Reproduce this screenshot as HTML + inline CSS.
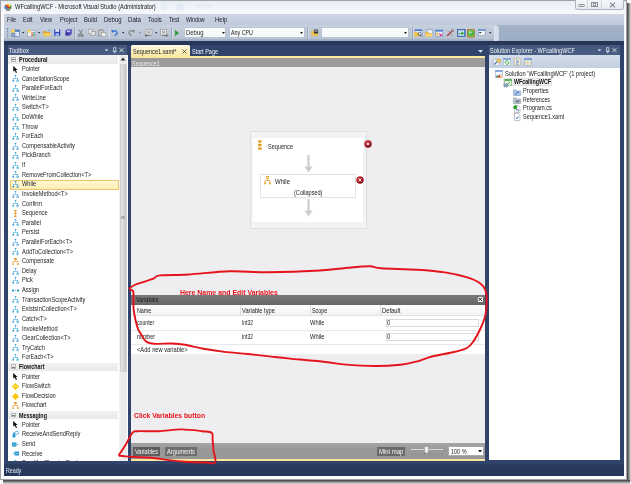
<!DOCTYPE html>
<html><head><meta charset="utf-8">
<style>
*{margin:0;padding:0;box-sizing:border-box}
html,body{width:631px;height:484px;overflow:hidden;background:#fff}
body{position:relative;font-family:"Liberation Sans",sans-serif;color:#1e1e1e}
.a{position:absolute}
.t{position:absolute;white-space:nowrap;line-height:1;transform-origin:0 0}
svg.a{overflow:visible}
</style></head><body>
<svg width="0" height="0" style="position:absolute">
<defs>
<symbol id="hier" viewBox="0 0 7 7"><g fill="#3a9fd6" stroke="none"><rect x="2.7" y="0" width="1.6" height="1.3"/><rect x="3.25" y="1.3" width="0.5" height="1.7"/><rect x="1" y="3" width="5" height="0.5"/><rect x="1" y="3" width="0.5" height="2"/><rect x="5.5" y="3" width="0.5" height="2"/><rect x="0.4" y="5" width="1.7" height="1.6"/><circle cx="5.7" cy="5.8" r="1.15" fill="#8fd0ee" stroke="#3a9fd6" stroke-width="0.4"/></g></symbol>
<symbol id="hiero" viewBox="0 0 7 7"><g fill="#e09a20"><rect x="2.3" y="0" width="2.4" height="2"/><rect x="3.2" y="2" width="0.6" height="1.2"/><rect x="0.8" y="3.2" width="5.4" height="0.6"/><rect x="0.8" y="3.2" width="0.6" height="2.2"/><rect x="5.6" y="3.2" width="0.6" height="2.2"/><rect x="0.2" y="5.4" width="1.8" height="1.4"/><rect x="5" y="5.4" width="1.8" height="1.4"/></g></symbol>
<symbol id="seq" viewBox="0 0 7 7"><g fill="#e09a20"><rect x="2.2" y="0" width="2.4" height="1.4"/><rect x="2.2" y="2.8" width="2.4" height="1.4"/><rect x="2.2" y="5.6" width="2.4" height="1.4"/><rect x="3.1" y="1" width="0.6" height="5"/></g></symbol>
<symbol id="ptr" viewBox="0 0 7 7"><path d="M1.2 0 L1.2 5.6 L2.6 4.4 L4 7 L5 6.5 L3.8 4 L5.6 4 Z" fill="#111"/></symbol>
<symbol id="assign" viewBox="0 0 7 7"><g fill="#2a9ad0"><rect x="0" y="2.5" width="2" height="2"/><rect x="5" y="2.5" width="2" height="2"/><rect x="3" y="3.1" width="1" height="0.8"/></g></symbol>
<symbol id="diam" viewBox="0 0 7 7"><path d="M3.5 0.2 L6.8 3.5 L3.5 6.8 L0.2 3.5Z" fill="#f7c800" stroke="#f7c800" stroke-width="0.5" stroke-linejoin="round"/></symbol><symbol id="diamsw" viewBox="0 0 7 7"><path d="M3.5 0.2 L6.8 3.5 L3.5 6.8 L0.2 3.5Z" fill="#f7c800" stroke="#f7c800" stroke-width="0.5" stroke-linejoin="round"/><rect x="1.8" y="3.1" width="3.4" height="0.8" fill="#fff5c0"/></symbol>
<symbol id="send" viewBox="0 0 7 7"><rect x="0" y="1.5" width="4.5" height="4" fill="#2a9ad0"/><rect x="1" y="3" width="2.5" height="0.6" fill="#aee0f5"/><path d="M5.2 2.8 L6.6 3.5 L5.2 4.2Z" fill="#2a9ad0"/></symbol>
<symbol id="recv" viewBox="0 0 7 7"><rect x="2.5" y="1.5" width="4.5" height="4" fill="#2a9ad0"/><rect x="3.5" y="3" width="2.5" height="0.6" fill="#aee0f5"/><path d="M0.4 3.5 L1.8 2.8 L1.8 4.2Z" fill="#2a9ad0"/></symbol>
<symbol id="rasr" viewBox="0 0 7 7"><rect x="0.5" y="3" width="3" height="3.5" rx="0.8" fill="#2a9ad0"/><rect x="1" y="1.5" width="2" height="1.2" fill="#2a9ad0"/><ellipse cx="4.8" cy="1.8" rx="2" ry="1.4" fill="none" stroke="#2a9ad0" stroke-width="0.7"/></symbol>
<symbol id="err" viewBox="0 0 8 8"><defs><radialGradient id="eg" cx="0.38" cy="0.32" r="0.7"><stop offset="0" stop-color="#d8474a"/><stop offset="0.6" stop-color="#a81820"/><stop offset="1" stop-color="#7a0a10"/></radialGradient></defs><circle cx="4" cy="4" r="3.7" fill="url(#eg)"/><path d="M2.6 2.6 L5.4 5.4 M5.4 2.6 L2.6 5.4" stroke="#ececec" stroke-width="0.95"/></symbol>
</defs></svg>
<div class="a" style="left:0px;top:0px;width:627px;height:480px;border:1px solid #a2a2a2;background:linear-gradient(#e9eff7,#f7f9fc 13px,#fafbfd)"></div><div class="a" style="left:626.5px;top:3px;width:4px;height:479px;background:linear-gradient(90deg,#3e3e3e,#7a7a7a 40%,#e0e0e0)"></div><div class="a" style="left:3px;top:479.5px;width:627px;height:4px;background:linear-gradient(#3e3e3e,#7a7a7a 40%,#e0e0e0)"></div><svg class="a" style="left:4px;top:3px" width="8" height="8" viewBox="0 0 8 8"><path d="M0.5 2.5 L4 0.5 L7.5 2.5 L4 4.5Z" fill="#f4c030"/><path d="M0.5 2.5 L4 4.5 L4 7.5 L0.5 5.5Z" fill="#3070c0"/><path d="M7.5 2.5 L4 4.5 L4 7.5 L7.5 5.5Z" fill="#40a040"/><path d="M2 1.5 L6.5 5 L5.5 6 L1.2 2.5Z" fill="#e02020"/><rect x="2" y="5.5" width="4" height="2.5" fill="#909090"/></svg><div class="t" style="left:14.5px;top:3.76px;font-size:6.6px;color:#1a1a1a;transform:scaleX(0.8698);">WFcallingWCF - Microsoft Visual Studio (Administrator)</div><div class="a" style="left:574.5px;top:-1px;width:49px;height:11px;border:1px solid #aeb4bd;border-top:none;border-radius:0 0 3px 3px;background:linear-gradient(#f6f8fb,#e6eaf0)"></div><div class="a" style="left:587.4px;top:0px;width:0.8px;height:10px;background:#cfd4db"></div><div class="a" style="left:600.5px;top:0px;width:0.8px;height:10px;background:#cfd4db"></div><div class="a" style="left:578px;top:4.3px;width:6.5px;height:3px;border:0.8px solid #8b9097;border-radius:1.5px;background:#e2e5ea"></div><div class="a" style="left:591.2px;top:1.6px;width:6.4px;height:5.6px;border:0.8px solid #8b9097;background:#eef0f3"></div><div class="a" style="left:592.6px;top:3.3px;width:3.6px;height:2.4px;border:0.6px solid #9aa0a7"></div><svg class="a" style="left:608.5px;top:1.8px" width="7" height="6" viewBox="0 0 7 6"><path d="M1 0.6 L6 5.4 M6 0.6 L1 5.4" stroke="#7e848c" stroke-width="1.1"/></svg><div class="a" style="left:4px;top:14px;width:619.5px;height:11px;background:linear-gradient(#cdd5e3,#bfcadb)"></div><div class="a" style="left:4px;top:25px;width:619.5px;height:16px;background:linear-gradient(#a3b2c9,#9cacc4)"></div><div class="a" style="left:4px;top:25.3px;width:494px;height:15.2px;border-radius:0 2px 2px 0;background:linear-gradient(#c6d0de,#bcc7d7 70%,#b6c1d2);border-bottom:0.8px solid #a6b2c5"></div><div class="t" style="left:7px;top:16.76px;font-size:6.6px;color:#1b1b1b;transform:scaleX(0.8463);">File</div><div class="t" style="left:23.2px;top:16.76px;font-size:6.6px;color:#1b1b1b;transform:scaleX(0.8353);">Edit</div><div class="t" style="left:40px;top:16.76px;font-size:6.6px;color:#1b1b1b;transform:scaleX(0.8388);">View</div><div class="t" style="left:59.5px;top:16.76px;font-size:6.6px;color:#1b1b1b;transform:scaleX(0.8519);">Project</div><div class="t" style="left:84px;top:16.76px;font-size:6.6px;color:#1b1b1b;transform:scaleX(0.8858);">Build</div><div class="t" style="left:104px;top:16.76px;font-size:6.6px;color:#1b1b1b;transform:scaleX(0.8998);">Debug</div><div class="t" style="left:128px;top:16.76px;font-size:6.6px;color:#1b1b1b;transform:scaleX(0.9325);">Data</div><div class="t" style="left:147.7px;top:16.76px;font-size:6.6px;color:#1b1b1b;transform:scaleX(0.8860);">Tools</div><div class="t" style="left:169px;top:16.76px;font-size:6.6px;color:#1b1b1b;transform:scaleX(0.8570);">Test</div><div class="t" style="left:186.4px;top:16.76px;font-size:6.6px;color:#1b1b1b;transform:scaleX(0.7924);">Window</div><div class="t" style="left:214.7px;top:16.76px;font-size:6.6px;color:#1b1b1b;transform:scaleX(0.9062);">Help</div><div class="a" style="left:4px;top:41px;width:619.5px;height:435px;background:#30436a"></div><div class="a" style="left:4px;top:41px;width:619.5px;height:4px;background:#27375a"></div><div class="a" style="left:4px;top:463.5px;width:619.5px;height:12.5px;background:linear-gradient(#2a3b5e,#26365a)"></div><div class="t" style="left:6.2px;top:467.76px;font-size:6.6px;color:#e8ecf4;transform:scaleX(0.7967);">Ready</div><div class="a" style="left:7.5px;top:44.8px;width:119.2px;height:10.2px;background:linear-gradient(#43577d,#4a5d83)"></div><div class="t" style="left:9px;top:47.76px;font-size:6.6px;color:#eef2f8;transform:scaleX(0.8731);">Toolbox</div><svg class="a" style="left:104px;top:47px" width="21" height="7" viewBox="0 0 21 7"><path d="M0.6 2.4 L4.4 2.4 L2.5 4.3Z" fill="#e9eef6"/><path d="M9.6 0.6 H11.8 V4.4 H9.6Z M8.8 4.4 H12.6 M10.7 4.4 V6.6" stroke="#dfe5ee" stroke-width="0.7" fill="none"/><path d="M15.6 1.2 L19.4 5 M19.4 1.2 L15.6 5" stroke="#e3e8f0" stroke-width="0.9"/></svg><div class="a" style="left:8px;top:55px;width:119.5px;height:405.7px;background:#ffffff"></div><div class="a" style="left:118.5px;top:55px;width:8.4px;height:405.7px;background:linear-gradient(90deg,#f6f6f6,#ebebeb 20%)"></div><div class="a" style="left:119.5px;top:63.5px;width:7.5px;height:308.5px;background:linear-gradient(90deg,#e6e6e6,#d6d6d6 50%,#c9c9c9);border:1px solid #cfcfcf;border-radius:1px"></div><div class="a" style="left:121px;top:216px;width:4px;height:3px;background:#9a9a9a;opacity:0.7"></div><svg class="a" style="left:120px;top:57px" width="6" height="4" viewBox="0 0 6 4"><path d="M0.5 3.5 L3 0.5 L5.5 3.5Z" fill="#333"/></svg><div class="a" style="left:8px;top:55px;width:110.5px;height:405.7px;overflow:hidden"><div class="a" style="left:0px;top:0.0px;width:109.7px;height:8.6px;background:linear-gradient(#f2f2f2,#e9e9e9)"></div><div class="a" style="left:3.2px;top:1.8000000000000003px;width:4.8px;height:4.8px;border:0.8px solid #b4b4b4;background:linear-gradient(#fafafa,#e6e6e6)"></div><div class="a" style="left:4.4px;top:4.0px;width:2.4px;height:0.6px;background:#7a7a7a"></div><div class="t" style="left:11px;top:1.76px;font-size:6.6px;color:#111;font-weight:bold;transform:scaleX(0.8266);">Procedural</div><svg class="a" style="left:3.8px;top:10.615000000000002px" width="7" height="7" viewBox="0 0 7 7"><use href="#ptr"/></svg><div class="t" style="left:14px;top:10.76px;font-size:6.6px;color:#1e1e1e;transform:scaleX(0.8600);">Pointer</div><svg class="a" style="left:3.8px;top:20.23px" width="7" height="7" viewBox="0 0 7 7"><use href="#hier"/></svg><div class="t" style="left:14px;top:20.76px;font-size:6.6px;color:#1e1e1e;transform:scaleX(0.8600);">CancellationScope</div><svg class="a" style="left:3.8px;top:29.845000000000002px" width="7" height="7" viewBox="0 0 7 7"><use href="#hier"/></svg><div class="t" style="left:14px;top:29.76px;font-size:6.6px;color:#1e1e1e;transform:scaleX(0.8600);">ParallelForEach</div><svg class="a" style="left:3.8px;top:39.46px" width="7" height="7" viewBox="0 0 7 7"><use href="#hier"/></svg><div class="t" style="left:14px;top:39.76px;font-size:6.6px;color:#1e1e1e;transform:scaleX(0.8600);">WriteLine</div><svg class="a" style="left:3.8px;top:49.075px" width="7" height="7" viewBox="0 0 7 7"><use href="#hier"/></svg><div class="t" style="left:14px;top:48.76px;font-size:6.6px;color:#1e1e1e;transform:scaleX(0.8600);">Switch&lt;T&gt;</div><svg class="a" style="left:3.8px;top:58.69px" width="7" height="7" viewBox="0 0 7 7"><use href="#hier"/></svg><div class="t" style="left:14px;top:58.76px;font-size:6.6px;color:#1e1e1e;transform:scaleX(0.8600);">DoWhile</div><svg class="a" style="left:3.8px;top:68.305px" width="7" height="7" viewBox="0 0 7 7"><use href="#hier"/></svg><div class="t" style="left:14px;top:68.76px;font-size:6.6px;color:#1e1e1e;transform:scaleX(0.8600);">Throw</div><svg class="a" style="left:3.8px;top:77.92px" width="7" height="7" viewBox="0 0 7 7"><use href="#hier"/></svg><div class="t" style="left:14px;top:77.76px;font-size:6.6px;color:#1e1e1e;transform:scaleX(0.8600);">ForEach</div><svg class="a" style="left:3.8px;top:87.535px" width="7" height="7" viewBox="0 0 7 7"><use href="#hier"/></svg><div class="t" style="left:14px;top:87.76px;font-size:6.6px;color:#1e1e1e;transform:scaleX(0.8600);">CompensableActivity</div><svg class="a" style="left:3.8px;top:97.15px" width="7" height="7" viewBox="0 0 7 7"><use href="#hier"/></svg><div class="t" style="left:14px;top:96.76px;font-size:6.6px;color:#1e1e1e;transform:scaleX(0.8600);">PickBranch</div><svg class="a" style="left:3.8px;top:106.765px" width="7" height="7" viewBox="0 0 7 7"><use href="#hier"/></svg><div class="t" style="left:14px;top:106.76px;font-size:6.6px;color:#1e1e1e;transform:scaleX(0.8600);">If</div><svg class="a" style="left:3.8px;top:116.38px" width="7" height="7" viewBox="0 0 7 7"><use href="#hier"/></svg><div class="t" style="left:14px;top:116.76px;font-size:6.6px;color:#1e1e1e;transform:scaleX(0.8600);">RemoveFromCollection&lt;T&gt;</div><div class="a" style="left:2px;top:125.295px;width:108.5px;height:9.3px;border:1px solid #e8c46c;background:linear-gradient(#fff8d8,#fdeeb0)"></div><svg class="a" style="left:3.8px;top:125.99499999999999px" width="7" height="7" viewBox="0 0 7 7"><use href="#hier"/></svg><div class="t" style="left:14px;top:125.76px;font-size:6.6px;color:#1e1e1e;transform:scaleX(0.8600);">While</div><svg class="a" style="left:3.8px;top:135.61px" width="7" height="7" viewBox="0 0 7 7"><use href="#hier"/></svg><div class="t" style="left:14px;top:135.76px;font-size:6.6px;color:#1e1e1e;transform:scaleX(0.8600);">InvokeMethod&lt;T&gt;</div><svg class="a" style="left:3.8px;top:145.225px" width="7" height="7" viewBox="0 0 7 7"><use href="#hier"/></svg><div class="t" style="left:14px;top:145.76px;font-size:6.6px;color:#1e1e1e;transform:scaleX(0.8600);">Confirm</div><svg class="a" style="left:3.8px;top:154.84px" width="7" height="7" viewBox="0 0 7 7"><use href="#seq"/></svg><div class="t" style="left:14px;top:154.76px;font-size:6.6px;color:#1e1e1e;transform:scaleX(0.8600);">Sequence</div><svg class="a" style="left:3.8px;top:164.455px" width="7" height="7" viewBox="0 0 7 7"><use href="#hier"/></svg><div class="t" style="left:14px;top:164.76px;font-size:6.6px;color:#1e1e1e;transform:scaleX(0.8600);">Parallel</div><svg class="a" style="left:3.8px;top:174.07px" width="7" height="7" viewBox="0 0 7 7"><use href="#hier"/></svg><div class="t" style="left:14px;top:173.76px;font-size:6.6px;color:#1e1e1e;transform:scaleX(0.8600);">Persist</div><svg class="a" style="left:3.8px;top:183.685px" width="7" height="7" viewBox="0 0 7 7"><use href="#hier"/></svg><div class="t" style="left:14px;top:183.76px;font-size:6.6px;color:#1e1e1e;transform:scaleX(0.8600);">ParallelForEach&lt;T&gt;</div><svg class="a" style="left:3.8px;top:193.3px" width="7" height="7" viewBox="0 0 7 7"><use href="#hier"/></svg><div class="t" style="left:14px;top:193.76px;font-size:6.6px;color:#1e1e1e;transform:scaleX(0.8600);">AddToCollection&lt;T&gt;</div><svg class="a" style="left:3.8px;top:202.915px" width="7" height="7" viewBox="0 0 7 7"><use href="#hiero"/></svg><div class="t" style="left:14px;top:202.76px;font-size:6.6px;color:#1e1e1e;transform:scaleX(0.8600);">Compensate</div><svg class="a" style="left:3.8px;top:212.53px" width="7" height="7" viewBox="0 0 7 7"><use href="#hier"/></svg><div class="t" style="left:14px;top:212.76px;font-size:6.6px;color:#1e1e1e;transform:scaleX(0.8600);">Delay</div><svg class="a" style="left:3.8px;top:222.145px" width="7" height="7" viewBox="0 0 7 7"><use href="#hier"/></svg><div class="t" style="left:14px;top:221.76px;font-size:6.6px;color:#1e1e1e;transform:scaleX(0.8600);">Pick</div><svg class="a" style="left:3.8px;top:231.76px" width="7" height="7" viewBox="0 0 7 7"><use href="#assign"/></svg><div class="t" style="left:14px;top:231.76px;font-size:6.6px;color:#1e1e1e;transform:scaleX(0.8600);">Assign</div><svg class="a" style="left:3.8px;top:241.375px" width="7" height="7" viewBox="0 0 7 7"><use href="#hier"/></svg><div class="t" style="left:14px;top:241.76px;font-size:6.6px;color:#1e1e1e;transform:scaleX(0.8600);">TransactionScopeActivity</div><svg class="a" style="left:3.8px;top:250.99px" width="7" height="7" viewBox="0 0 7 7"><use href="#hier"/></svg><div class="t" style="left:14px;top:250.76px;font-size:6.6px;color:#1e1e1e;transform:scaleX(0.8600);">ExistsInCollection&lt;T&gt;</div><svg class="a" style="left:3.8px;top:260.605px" width="7" height="7" viewBox="0 0 7 7"><use href="#hier"/></svg><div class="t" style="left:14px;top:260.76px;font-size:6.6px;color:#1e1e1e;transform:scaleX(0.8600);">Catch&lt;T&gt;</div><svg class="a" style="left:3.8px;top:270.22px" width="7" height="7" viewBox="0 0 7 7"><use href="#hier"/></svg><div class="t" style="left:14px;top:270.76px;font-size:6.6px;color:#1e1e1e;transform:scaleX(0.8600);">InvokeMethod</div><svg class="a" style="left:3.8px;top:279.835px" width="7" height="7" viewBox="0 0 7 7"><use href="#hier"/></svg><div class="t" style="left:14px;top:279.76px;font-size:6.6px;color:#1e1e1e;transform:scaleX(0.8600);">ClearCollection&lt;T&gt;</div><svg class="a" style="left:3.8px;top:289.45px" width="7" height="7" viewBox="0 0 7 7"><use href="#hier"/></svg><div class="t" style="left:14px;top:289.76px;font-size:6.6px;color:#1e1e1e;transform:scaleX(0.8600);">TryCatch</div><svg class="a" style="left:3.8px;top:299.065px" width="7" height="7" viewBox="0 0 7 7"><use href="#hier"/></svg><div class="t" style="left:14px;top:298.76px;font-size:6.6px;color:#1e1e1e;transform:scaleX(0.8600);">ForEach&lt;T&gt;</div><div class="a" style="left:0px;top:307.68px;width:109.7px;height:8.6px;background:linear-gradient(#f2f2f2,#e9e9e9)"></div><div class="a" style="left:3.2px;top:309.48px;width:4.8px;height:4.8px;border:0.8px solid #b4b4b4;background:linear-gradient(#fafafa,#e6e6e6)"></div><div class="a" style="left:4.4px;top:311.68px;width:2.4px;height:0.6px;background:#7a7a7a"></div><div class="t" style="left:11px;top:308.76px;font-size:6.6px;color:#111;font-weight:bold;transform:scaleX(0.8181);">Flowchart</div><svg class="a" style="left:3.8px;top:318.295px" width="7" height="7" viewBox="0 0 7 7"><use href="#ptr"/></svg><div class="t" style="left:14px;top:318.76px;font-size:6.6px;color:#1e1e1e;transform:scaleX(0.8600);">Pointer</div><svg class="a" style="left:3.8px;top:327.91px" width="7" height="7" viewBox="0 0 7 7"><use href="#diamsw"/></svg><div class="t" style="left:14px;top:327.76px;font-size:6.6px;color:#1e1e1e;transform:scaleX(0.8600);">FlowSwitch</div><svg class="a" style="left:3.8px;top:337.52500000000003px" width="7" height="7" viewBox="0 0 7 7"><use href="#diam"/></svg><div class="t" style="left:14px;top:337.76px;font-size:6.6px;color:#1e1e1e;transform:scaleX(0.8600);">FlowDecision</div><svg class="a" style="left:3.8px;top:347.14px" width="7" height="7" viewBox="0 0 7 7"><use href="#hiero"/></svg><div class="t" style="left:14px;top:346.76px;font-size:6.6px;color:#1e1e1e;transform:scaleX(0.8600);">Flowchart</div><div class="a" style="left:0px;top:355.755px;width:109.7px;height:8.6px;background:linear-gradient(#f2f2f2,#e9e9e9)"></div><div class="a" style="left:3.2px;top:357.555px;width:4.8px;height:4.8px;border:0.8px solid #b4b4b4;background:linear-gradient(#fafafa,#e6e6e6)"></div><div class="a" style="left:4.4px;top:359.755px;width:2.4px;height:0.6px;background:#7a7a7a"></div><div class="t" style="left:11px;top:357.76px;font-size:6.6px;color:#111;font-weight:bold;transform:scaleX(0.8209);">Messaging</div><svg class="a" style="left:3.8px;top:366.37px" width="7" height="7" viewBox="0 0 7 7"><use href="#ptr"/></svg><div class="t" style="left:14px;top:366.76px;font-size:6.6px;color:#1e1e1e;transform:scaleX(0.8600);">Pointer</div><svg class="a" style="left:3.8px;top:375.985px" width="7" height="7" viewBox="0 0 7 7"><use href="#rasr"/></svg><div class="t" style="left:14px;top:375.76px;font-size:6.6px;color:#1e1e1e;transform:scaleX(0.8600);">ReceiveAndSendReply</div><svg class="a" style="left:3.8px;top:385.6px" width="7" height="7" viewBox="0 0 7 7"><use href="#send"/></svg><div class="t" style="left:14px;top:385.76px;font-size:6.6px;color:#1e1e1e;transform:scaleX(0.8600);">Send</div><svg class="a" style="left:3.8px;top:395.21500000000003px" width="7" height="7" viewBox="0 0 7 7"><use href="#recv"/></svg><div class="t" style="left:14px;top:395.76px;font-size:6.6px;color:#1e1e1e;transform:scaleX(0.8600);">Receive</div><svg class="a" style="left:3.8px;top:404.83px" width="7" height="7" viewBox="0 0 7 7"><use href="#hier"/></svg><div class="t" style="left:14px;top:404.76px;font-size:6.6px;color:#1e1e1e;transform:scaleX(0.8600);">SendAndReceiveReply</div></div><svg class="a" style="left:478px;top:50px" width="5" height="3" viewBox="0 0 5 3"><path d="M0 0 L5 0 L2.5 2.8Z" fill="#dfe5ee"/></svg><div class="a" style="left:131px;top:45.2px;width:59px;height:12px;border-radius:1.5px 1.5px 0 0;background:linear-gradient(#fffbe8,#fdf1c4 45%,#fce7a0)"></div><div class="t" style="left:132.8px;top:48.76px;font-size:6.6px;color:#1e1e1e;transform:scaleX(0.8409);">Sequence1.xaml*</div><svg class="a" style="left:182px;top:49px" width="5" height="5" viewBox="0 0 5 5"><path d="M0.5 0.5 L4.5 4.5 M4.5 0.5 L0.5 4.5" stroke="#3a3a3a" stroke-width="0.8"/></svg><div class="t" style="left:192.2px;top:48.76px;font-size:6.6px;color:#f2f5fa;transform:scaleX(0.8369);">Start Page</div><div class="a" style="left:131px;top:56px;width:354.3px;height:2.2px;background:#fce7a0"></div><div class="a" style="left:131px;top:58.2px;width:354.3px;height:8.6px;background:#9c9c9c"></div><div class="t" style="left:132.4px;top:60.76px;font-size:6.6px;color:#ececec;transform:scaleX(0.8324);">Sequence1</div><div class="a" style="left:131px;top:66.8px;width:354.3px;height:376.2px;background:#eeeef0"></div><div class="a" style="left:250.3px;top:131.4px;width:116.7px;height:97.2px;border:1px solid #dedee0;background:#f3f3f5"></div><div class="a" style="left:253.4px;top:138.3px;width:109.8px;height:83.7px;background:#ffffff"></div><svg class="a" style="left:257px;top:140px" width="6" height="10" viewBox="0 0 6 10"><g fill="#e3a02a"><rect x="0.8" y="0.2" width="4" height="2.2" rx="0.8"/><rect x="0.8" y="3.9" width="4" height="2.2" rx="0.8"/><rect x="0.8" y="7.6" width="4" height="2.2" rx="0.8"/><rect x="2.5" y="1" width="0.7" height="8"/></g></svg><div class="t" style="left:268px;top:143.76px;font-size:6.6px;color:#222;transform:scaleX(0.8410);">Sequence</div><svg class="a" style="left:363.5px;top:140.1px" width="8" height="8" viewBox="0 0 8 8"><use href="#err"/></svg><svg class="a" style="left:304px;top:155px" width="9" height="18" viewBox="0 0 9 18"><path d="M3.4 0 H5.6 V11.5 H8.6 L4.5 17.5 L0.4 11.5 H3.4Z" fill="#cdcdcd"/></svg><div class="a" style="left:259.9px;top:174.1px;width:96.6px;height:24px;border:1px solid #e4e4e4;background:#ffffff"></div><svg class="a" style="left:264px;top:176px" width="7" height="9" viewBox="0 0 7 9"><g fill="none" stroke="#e09a20" stroke-width="0.7"><rect x="2.3" y="0.4" width="2.4" height="2.2"/><path d="M3.5 2.6 L3.5 4.6 M1 4.6 L6 4.6 M1 4.6 L1 7 M6 4.6 L6 7"/></g><circle cx="1" cy="7.5" r="0.9" fill="#e09a20"/><circle cx="6" cy="7.5" r="0.9" fill="#e09a20"/></svg><div class="t" style="left:275px;top:178.76px;font-size:6.6px;color:#222;transform:scaleX(0.9089);">While</div><div class="t" style="left:293.7px;top:189.76px;font-size:6.6px;color:#222;transform:scaleX(0.8445);">(Collapsed)</div><svg class="a" style="left:356.3px;top:175.7px" width="8" height="8" viewBox="0 0 8 8"><use href="#err"/></svg><svg class="a" style="left:304px;top:199px" width="9" height="18" viewBox="0 0 9 18"><path d="M3.4 0 H5.6 V11.5 H8.6 L4.5 17.5 L0.4 11.5 H3.4Z" fill="#cdcdcd"/></svg><div class="a" style="left:131px;top:294.7px;width:354.3px;height:9.9px;background:linear-gradient(#7a7a7a,#666)"></div><div class="t" style="left:135.9px;top:296.76px;font-size:6.6px;color:#1a1a1a;transform:scaleX(0.8323);">Variables</div><svg class="a" style="left:477.4px;top:296px" width="6.5" height="6.5" viewBox="0 0 7 7"><rect x="0.3" y="0.3" width="6.4" height="6.4" fill="#f4f4f4" stroke="#333" stroke-width="0.5"/><path d="M1.8 1.8 L5.2 5.2 M5.2 1.8 L1.8 5.2" stroke="#111" stroke-width="1"/></svg><div class="a" style="left:131px;top:304.6px;width:354.3px;height:49.9px;background:#ffffff"></div><div class="a" style="left:131px;top:304.6px;width:354.3px;height:11.8px;background:linear-gradient(#ffffff,#f1f2f4);border-bottom:1px solid #e1e3e6"></div><div class="a" style="left:239.8px;top:305px;width:0.8px;height:11px;background:#dcdde0"></div><div class="a" style="left:309.5px;top:305px;width:0.8px;height:11px;background:#dcdde0"></div><div class="a" style="left:380px;top:305px;width:0.8px;height:11px;background:#dcdde0"></div><div class="t" style="left:137.4px;top:307.76px;font-size:6.6px;color:#222;transform:scaleX(0.8123);">Name</div><div class="t" style="left:242px;top:307.76px;font-size:6.6px;color:#222;transform:scaleX(0.8644);">Variable type</div><div class="t" style="left:312px;top:307.76px;font-size:6.6px;color:#222;transform:scaleX(0.8176);">Scope</div><div class="t" style="left:382.4px;top:307.76px;font-size:6.6px;color:#222;transform:scaleX(0.8799);">Default</div><div class="a" style="left:131px;top:330px;width:354.3px;height:0.8px;background:#e8e8ea"></div><div class="a" style="left:131px;top:344px;width:354.3px;height:0.8px;background:#e8e8ea"></div><div class="t" style="left:137px;top:319.76px;font-size:6.6px;color:#222;transform:scaleX(0.7813);">counter</div><div class="t" style="left:242px;top:319.76px;font-size:6.6px;color:#222;transform:scaleX(0.7494);">Int32</div><div class="t" style="left:310px;top:319.76px;font-size:6.6px;color:#222;transform:scaleX(0.8726);">While</div><div class="t" style="left:137px;top:333.76px;font-size:6.6px;color:#222;transform:scaleX(0.8044);">number</div><div class="t" style="left:242px;top:333.76px;font-size:6.6px;color:#222;transform:scaleX(0.7494);">Int32</div><div class="t" style="left:310px;top:333.76px;font-size:6.6px;color:#222;transform:scaleX(0.8726);">While</div><div class="a" style="left:385.6px;top:318.6px;width:93.6px;height:8.4px;border:0.7px solid #d6d9de;background:#fff"></div><div class="a" style="left:385.6px;top:332.5px;width:93.6px;height:8.4px;border:0.7px solid #d6d9de;background:#fff"></div><div class="t" style="left:386.8px;top:319.76px;font-size:6.6px;color:#222;transform:scaleX(0.8718);">0</div><div class="t" style="left:386.8px;top:333.76px;font-size:6.6px;color:#222;transform:scaleX(0.8718);">0</div><div class="t" style="left:136.5px;top:346.76px;font-size:6.6px;color:#222;transform:scaleX(0.8690);">&lt;Add new variable&gt;</div><div class="a" style="left:131px;top:443px;width:354.3px;height:16px;background:linear-gradient(#a4a4a4,#999 40%,#979797)"></div><div class="a" style="left:131px;top:459px;width:354.3px;height:1.5px;background:#fce7a0"></div><div class="a" style="left:133.3px;top:446.6px;width:26.7px;height:9.2px;background:#5e5e5e"></div><div class="t" style="left:135px;top:448.76px;font-size:6.6px;color:#f4f4f4;transform:scaleX(0.8541);">Variables</div><div class="a" style="left:165px;top:446.6px;width:32px;height:9.2px;background:#6e6e6e"></div><div class="t" style="left:167px;top:448.76px;font-size:6.6px;color:#f4f4f4;transform:scaleX(0.8774);">Arguments</div><div class="a" style="left:377.2px;top:447px;width:27.6px;height:8.6px;background:#6a6a6a"></div><div class="t" style="left:379px;top:448.76px;font-size:6.6px;color:#f4f4f4;transform:scaleX(0.9113);">Mini map</div><div class="a" style="left:411px;top:449px;width:32px;height:1.2px;background:#dadada"></div><svg class="a" style="left:423.8px;top:445.8px" width="5" height="8" viewBox="0 0 5 8"><path d="M0.4 0.4 H4.6 V5.6 L2.5 7.6 L0.4 5.6Z" fill="#ececec" stroke="#8a8a8a" stroke-width="0.6"/></svg><div class="a" style="left:412.0px;top:453.8px;width:0.6px;height:0.8px;background:#7a7a7a"></div><div class="a" style="left:417.9px;top:453.8px;width:0.6px;height:0.8px;background:#7a7a7a"></div><div class="a" style="left:423.8px;top:453.8px;width:0.6px;height:0.8px;background:#7a7a7a"></div><div class="a" style="left:429.7px;top:453.8px;width:0.6px;height:0.8px;background:#7a7a7a"></div><div class="a" style="left:435.6px;top:453.8px;width:0.6px;height:0.8px;background:#7a7a7a"></div><div class="a" style="left:441.5px;top:453.8px;width:0.6px;height:0.8px;background:#7a7a7a"></div><div class="a" style="left:447.6px;top:446.3px;width:36.1px;height:10.2px;background:#fff;border:0.5px solid #aaa"></div><div class="t" style="left:450.5px;top:448.76px;font-size:6.6px;color:#222;transform:scaleX(0.8283);">100 %</div><svg class="a" style="left:478px;top:450.2px" width="4" height="3" viewBox="0 0 4 3"><path d="M0 0 L4 0 L2 2.5Z" fill="#111"/></svg><div class="a" style="left:489px;top:44.8px;width:130.5px;height:9.8px;background:linear-gradient(#43577d,#4a5d83)"></div><div class="t" style="left:490px;top:47.76px;font-size:6.6px;color:#eef2f8;transform:scaleX(0.8489);">Solution Explorer - WFcallingWCF</div><svg class="a" style="left:597px;top:47px" width="21" height="7" viewBox="0 0 21 7"><path d="M0.6 2.4 L4.4 2.4 L2.5 4.3Z" fill="#e9eef6"/><path d="M9.6 0.6 H11.8 V4.4 H9.6Z M8.8 4.4 H12.6 M10.7 4.4 V6.6" stroke="#dfe5ee" stroke-width="0.7" fill="none"/><path d="M15.6 1.2 L19.4 5 M19.4 1.2 L15.6 5" stroke="#e3e8f0" stroke-width="0.9"/></svg><div class="a" style="left:489px;top:54.6px;width:130.5px;height:13.2px;background:linear-gradient(#d5deeb,#c3cfe0)"></div><div class="a" style="left:489px;top:67.8px;width:130.5px;height:392.7px;background:#ffffff"></div><svg class="a" style="left:492.9px;top:57.9px" width="8" height="8" viewBox="0 0 8 8"><path d="M0.5 1.5 L5 1.5 L6 2.5 L6 7.5 L0.5 7.5Z" fill="#f2f4f8" stroke="#9aa6b8" stroke-width="0.5"/><path d="M1.5 6.5 L4 3.5" stroke="#4a78c0" stroke-width="1.2"/><circle cx="5.8" cy="2.6" r="1.9" fill="#f0cd5a" stroke="#b89428" stroke-width="0.4"/></svg><svg class="a" style="left:503.2px;top:57.9px" width="8" height="8" viewBox="0 0 8 8"><rect x="0.3" y="0.3" width="7.4" height="7.2" fill="#fbfcfe" stroke="#8ea0bb" stroke-width="0.5"/><rect x="0.3" y="0.3" width="7.4" height="1.5" fill="#6b97db"/><path d="M2.2 5.2 A1.9 1.9 0 0 1 5.2 3.2" stroke="#3aa03a" stroke-width="1" fill="none"/><path d="M5.8 3.6 A1.9 1.9 0 0 1 2.8 5.8" stroke="#3aa03a" stroke-width="1" fill="none"/></svg><svg class="a" style="left:514.3px;top:57.9px" width="7" height="8" viewBox="0 0 7 8"><rect x="0.3" y="0.3" width="6.4" height="7.2" rx="1" fill="#efe8d4" stroke="#a99f88" stroke-width="0.5"/><path d="M2 2 L4.6 3.6 L2 5.2" stroke="#3b6fd4" stroke-width="0.8" fill="none"/><path d="M2 6.2 H5" stroke="#3b6fd4" stroke-width="0.5"/></svg><svg class="a" style="left:524.3px;top:57.9px" width="8" height="8" viewBox="0 0 8 8"><rect x="0.3" y="0.3" width="7.4" height="7.2" fill="#e9e4d2" stroke="#8e9aae" stroke-width="0.5"/><rect x="0.3" y="0.3" width="7.4" height="1.6" fill="#6b97db"/><path d="M0.5 4.5 H7.5 M3.5 2 V7.5" stroke="#c9c2aa" stroke-width="0.4"/></svg><svg class="a" style="left:494.6px;top:70.3px" width="8" height="8" viewBox="0 0 8 8"><rect x="0.3" y="0.3" width="7.4" height="7.2" fill="#fdfdfe" stroke="#8ea0bb" stroke-width="0.5"/><rect x="0.3" y="0.3" width="7.4" height="1.5" fill="#6b97db"/><path d="M0.5 7.5 L2.2 4.8 L3.4 7.5Z" fill="#3aa040"/><path d="M2.6 7.5 L4.4 4.2 L5.6 7.5Z" fill="#e23a2a"/><path d="M4.8 7.5 L6.4 5 L7.6 7.5Z" fill="#f0b428"/><path d="M1 6.5 L7 4" stroke="#3a6fd0" stroke-width="0.4"/></svg><div class="t" style="left:504.6px;top:70.76px;font-size:6.6px;color:#222;transform:scaleX(0.8694);">Solution 'WFcallingWCF' (1 project)</div><div class="a" style="left:502.7px;top:78.2px;width:49.6px;height:8.2px;background:#f0f0f0;border:0.5px solid #e0e0e0"></div><svg class="a" style="left:504px;top:78.5px" width="8" height="8" viewBox="0 0 8 8"><rect x="0.8" y="0.3" width="6.9" height="6.5" fill="#e8f3e4" stroke="#4a9a4a" stroke-width="0.5"/><rect x="0.8" y="0.3" width="6.9" height="1.5" fill="#3c9e3c"/><path d="M2.5 4.6 L3.8 5.6 L5.8 3" stroke="#2f9a2f" stroke-width="0.9" fill="none"/><rect x="0" y="5" width="3.4" height="3" fill="#8aa4cc" stroke="#5f7aa6" stroke-width="0.4"/></svg><div class="t" style="left:514px;top:78.76px;font-size:6.6px;color:#111;font-weight:bold;transform:scaleX(0.8010);">WFcallingWCF</div><svg class="a" style="left:513px;top:87.5px" width="8" height="8" viewBox="0 0 8 8"><path d="M0.5 2 L3 2 L3.8 3 L7.5 3 L7.5 7.5 L0.5 7.5Z" fill="#a9c4e6" stroke="#6d8fb8" stroke-width="0.5"/><path d="M2.5 6.5 L5 3.8 L6 4.6" stroke="#2f5fb0" stroke-width="0.9" fill="none"/></svg><div class="t" style="left:523px;top:87.76px;font-size:6.6px;color:#222;transform:scaleX(0.8544);">Properties</div><svg class="a" style="left:513px;top:96px" width="8" height="8" viewBox="0 0 8 8"><path d="M0.5 2 L3 2 L3.8 3 L7.5 3 L7.5 7.5 L0.5 7.5Z" fill="#c4ccd6" stroke="#7e8894" stroke-width="0.5"/><rect x="2.5" y="4.3" width="4" height="2" fill="#6c7a8c"/></svg><div class="t" style="left:523px;top:96.76px;font-size:6.6px;color:#222;transform:scaleX(0.8000);">References</div><svg class="a" style="left:513px;top:104.5px" width="8" height="8" viewBox="0 0 8 8"><path d="M1.5 0.5 L5.5 0.5 L7 2 L7 7.5 L1.5 7.5Z" fill="#fff" stroke="#7e8894" stroke-width="0.5"/><circle cx="2.3" cy="2.3" r="2" fill="#2e9c2e"/><path d="M3 4.5 H6 M3 5.8 H6" stroke="#4a6aa0" stroke-width="0.6"/></svg><div class="t" style="left:523px;top:104.76px;font-size:6.6px;color:#222;transform:scaleX(0.8536);">Program.cs</div><svg class="a" style="left:513px;top:113px" width="8" height="8" viewBox="0 0 8 8"><path d="M1.5 0.5 L5.5 0.5 L7 2 L7 7.5 L1.5 7.5Z" fill="#fff" stroke="#7e8894" stroke-width="0.5"/><path d="M2.7 4.8 L3.8 5.8 L5.5 3.5" stroke="#2a66c8" stroke-width="1" fill="none"/></svg><div class="t" style="left:523px;top:113.76px;font-size:6.6px;color:#222;transform:scaleX(0.8339);">Sequence1.xaml</div><div class="a" style="left:7px;top:27.5px;width:0.9px;height:0.9px;background:#7d8ba2"></div><div class="a" style="left:7px;top:29.3px;width:0.9px;height:0.9px;background:#7d8ba2"></div><div class="a" style="left:7px;top:31.1px;width:0.9px;height:0.9px;background:#7d8ba2"></div><div class="a" style="left:7px;top:32.9px;width:0.9px;height:0.9px;background:#7d8ba2"></div><div class="a" style="left:7px;top:34.7px;width:0.9px;height:0.9px;background:#7d8ba2"></div><div class="a" style="left:7px;top:36.5px;width:0.9px;height:0.9px;background:#7d8ba2"></div><svg class="a" style="left:10.5px;top:28.8px" width="9" height="8" viewBox="0 0 9 8"><rect x="2" y="1" width="6.5" height="6.5" fill="#dce8f8" stroke="#4f74b0" stroke-width="0.6"/><rect x="2" y="1" width="6.5" height="1.8" fill="#4a78c8"/><circle cx="2" cy="2" r="2" fill="#f5d35a"/><rect x="0.8" y="4" width="3.2" height="3.8" fill="#8fa6c8" stroke="#56709c" stroke-width="0.4"/></svg><svg class="a" style="left:21.6px;top:32.2px" width="2.4" height="1.6" viewBox="0 0 2.4 1.6"><path d="M0 0 L2.4 0 L1.2 1.5Z" fill="#1e1e1e"/></svg><svg class="a" style="left:26.7px;top:28.8px" width="9" height="8" viewBox="0 0 9 8"><rect x="0.8" y="1.5" width="7.6" height="6" fill="#f2f3f6" stroke="#7c8aa3" stroke-width="0.5"/><circle cx="2" cy="2" r="1.8" fill="#f5d35a"/><rect x="4.3" y="3" width="1.6" height="1.6" fill="#e8a030"/><rect x="6.2" y="3" width="1.6" height="1.6" fill="#40a0e0"/><rect x="4.3" y="5" width="1.6" height="1.6" fill="#e04040"/><rect x="6.2" y="5" width="1.6" height="1.6" fill="#40b040"/></svg><svg class="a" style="left:37.699999999999996px;top:32.2px" width="2.4" height="1.6" viewBox="0 0 2.4 1.6"><path d="M0 0 L2.4 0 L1.2 1.5Z" fill="#1e1e1e"/></svg><svg class="a" style="left:42.8px;top:28.5px" width="8" height="8" viewBox="0 0 8 8"><path d="M0.3 2 L3 2 L3.8 3 L7 3 L7 7.3 L0.3 7.3Z" fill="#d9a531"/><path d="M1.2 4 L7.8 4 L6.8 7.3 L0.3 7.3Z" fill="#f6cf62"/><path d="M5 1.5 Q6.5 0.3 7.5 2" stroke="#3a70c0" stroke-width="0.6" fill="none"/></svg><svg class="a" style="left:54.4px;top:29px" width="6.5" height="7" viewBox="0 0 6.5 7"><rect x="0.2" y="0.2" width="6.1" height="6.6" fill="#2b49b8"/><rect x="1.3" y="0.2" width="3.9" height="2.6" fill="#e8ecf6"/><rect x="1.5" y="4.2" width="3.5" height="2.6" fill="#a9b8e6"/></svg><svg class="a" style="left:65px;top:29px" width="7" height="7" viewBox="0 0 7 7"><path d="M2 0.3 L6.8 0.3 L6.8 5 L4.8 6.8 L0.2 6.8 L0.2 2Z" fill="#5a4fc0"/><rect x="2" y="1.5" width="3" height="1.6" fill="#c8c8f0"/><rect x="1" y="3.6" width="3" height="2.5" fill="#3a3a9a"/></svg><div class="a" style="left:74.4px;top:27px;width:0.7px;height:12px;background:#9ba7ba"></div><div class="a" style="left:75.10000000000001px;top:27px;width:0.5px;height:12px;background:#d4dbe6"></div><svg class="a" style="left:78px;top:28.5px" width="5.5" height="8" viewBox="0 0 5.5 8"><path d="M1 0.5 L4 5.5 M4.5 0.5 L1.5 5.5" stroke="#6f6f6f" stroke-width="0.8"/><circle cx="1.3" cy="6.5" r="1.1" fill="none" stroke="#555" stroke-width="0.7"/><circle cx="4.2" cy="6.5" r="1.1" fill="none" stroke="#555" stroke-width="0.7"/></svg><svg class="a" style="left:87.5px;top:29px" width="7.5" height="7" viewBox="0 0 7.5 7"><rect x="0.3" y="0.3" width="4" height="4.5" fill="#f4f4f4" stroke="#8a8a8a" stroke-width="0.5"/><rect x="3" y="2.2" width="4.2" height="4.5" fill="#e4e4e4" stroke="#7a7a7a" stroke-width="0.5"/></svg><svg class="a" style="left:98px;top:28.6px" width="8" height="8" viewBox="0 0 8 8"><rect x="0.5" y="1" width="5" height="6" fill="#c8c8c8" stroke="#777" stroke-width="0.5"/><rect x="1.8" y="0.3" width="2.4" height="1.4" fill="#999"/><rect x="3.5" y="3.5" width="4.2" height="4.2" fill="#f0f0f0" stroke="#888" stroke-width="0.5"/></svg><div class="a" style="left:108.6px;top:27px;width:0.7px;height:12px;background:#9ba7ba"></div><div class="a" style="left:109.3px;top:27px;width:0.5px;height:12px;background:#d4dbe6"></div><svg class="a" style="left:111.4px;top:29px" width="7" height="7" viewBox="0 0 7 7"><path d="M1.5 2.5 Q5 0.8 6 3.2 Q6.5 5.3 3.5 6.5" stroke="#2f74d6" stroke-width="1.3" fill="none"/><path d="M0 1 L3 1.2 L1.6 4Z" fill="#2f74d6"/></svg><svg class="a" style="left:122.1px;top:32.2px" width="2.4" height="1.6" viewBox="0 0 2.4 1.6"><path d="M0 0 L2.4 0 L1.2 1.5Z" fill="#1e1e1e"/></svg><svg class="a" style="left:128px;top:29px" width="7" height="7" viewBox="0 0 7 7"><path d="M5.5 2.5 Q2 0.8 1 3.2 Q0.5 5.3 3.5 6.5" stroke="#7d7d7d" stroke-width="1.1" fill="none"/><path d="M7 1 L4 1.2 L5.4 4Z" fill="#7d7d7d"/></svg><div class="a" style="left:139px;top:32.3px;width:1.5px;height:0.6px;background:#8e99ab"></div><svg class="a" style="left:144px;top:28.6px" width="9" height="8" viewBox="0 0 9 8"><rect x="2" y="0.5" width="6" height="5.5" fill="#e4e4e4" stroke="#8a8a8a" stroke-width="0.5"/><path d="M3.5 2 L6.5 4.5 M6.5 2 L3.5 4.5" stroke="#555" stroke-width="0.5"/><path d="M0 6.5 L3 5 L3 8Z" fill="#777"/><rect x="2.5" y="6" width="4" height="1" fill="#777"/></svg><svg class="a" style="left:154.60000000000002px;top:32.2px" width="2.4" height="1.6" viewBox="0 0 2.4 1.6"><path d="M0 0 L2.4 0 L1.2 1.5Z" fill="#1e1e1e"/></svg><svg class="a" style="left:159.8px;top:28.6px" width="9" height="8" viewBox="0 0 9 8"><rect x="0.5" y="0.5" width="6" height="5.5" fill="#e4e4e4" stroke="#8a8a8a" stroke-width="0.5"/><path d="M2 2 L5 4.5 M5 2 L2 4.5" stroke="#555" stroke-width="0.5"/><path d="M9 6.5 L6 5 L6 8Z" fill="#777"/><rect x="2.5" y="6" width="4" height="1" fill="#777"/></svg><div class="a" style="left:170.9px;top:27px;width:0.7px;height:12px;background:#9ba7ba"></div><div class="a" style="left:171.6px;top:27px;width:0.5px;height:12px;background:#d4dbe6"></div><svg class="a" style="left:175.2px;top:30.2px" width="4" height="6" viewBox="0 0 4 6"><path d="M0 0 L4 3 L0 6Z" fill="#2a9a2a"/></svg><div class="a" style="left:183.6px;top:27.2px;width:42.80000000000001px;height:11.1px;background:linear-gradient(#fdfdfe,#f4f6f9);border:0.6px solid #b9c3d2"></div><div class="t" style="left:186.0px;top:29.76px;font-size:6.6px;color:#1e1e1e;transform:scaleX(0.8998);">Debug</div><svg class="a" style="left:221.8px;top:32.2px" width="3" height="2" viewBox="0 0 3 2"><path d="M0 0 L3 0 L1.5 2Z" fill="#1e1e1e"/></svg><div class="a" style="left:228.7px;top:27.2px;width:76.30000000000001px;height:11.1px;background:linear-gradient(#fdfdfe,#f4f6f9);border:0.6px solid #b9c3d2"></div><div class="t" style="left:231.1px;top:29.76px;font-size:6.6px;color:#1e1e1e;transform:scaleX(0.8106);">Any CPU</div><svg class="a" style="left:300.4px;top:32.2px" width="3" height="2" viewBox="0 0 3 2"><path d="M0 0 L3 0 L1.5 2Z" fill="#1e1e1e"/></svg><div class="a" style="left:307.4px;top:27px;width:0.7px;height:12px;background:#9ba7ba"></div><div class="a" style="left:308.09999999999997px;top:27px;width:0.5px;height:12px;background:#d4dbe6"></div><svg class="a" style="left:310.6px;top:29.2px" width="7.5" height="7" viewBox="0 0 7.5 7"><path d="M0.3 2 L3 2 L3.6 3 L7 3 L7 6.8 L0.3 6.8Z" fill="#f0c040"/><rect x="3" y="0.5" width="4.2" height="4" fill="#3a3a3a"/><rect x="3.6" y="1.2" width="3" height="1.5" fill="#9ab"/></svg><div class="a" style="left:320.9px;top:27.2px;width:87.80000000000001px;height:11.1px;background:linear-gradient(#fdfdfe,#f4f6f9);border:0.6px solid #b9c3d2"></div><svg class="a" style="left:404.09999999999997px;top:32.2px" width="3" height="2" viewBox="0 0 3 2"><path d="M0 0 L3 0 L1.5 2Z" fill="#1e1e1e"/></svg><div class="a" style="left:411.9px;top:27px;width:0.7px;height:12px;background:#9ba7ba"></div><div class="a" style="left:412.59999999999997px;top:27px;width:0.5px;height:12px;background:#d4dbe6"></div><svg class="a" style="left:414px;top:28.8px" width="8.5" height="8" viewBox="0 0 8.5 8"><rect x="1" y="0.5" width="7" height="6" fill="#dfe9f6" stroke="#6a85b0" stroke-width="0.5"/><rect x="1" y="0.5" width="7" height="1.5" fill="#4e7cc8"/><path d="M0 3 L3 3 L4 4 L5 4 L5 7.5 L0 7.5Z" fill="#f2c94c"/><circle cx="5.5" cy="5" r="1.6" fill="none" stroke="#333" stroke-width="0.6"/><path d="M6.6 6.1 L8 7.6" stroke="#333" stroke-width="0.8"/></svg><svg class="a" style="left:424.6px;top:28.8px" width="8" height="8" viewBox="0 0 8 8"><rect x="2" y="0.5" width="5.5" height="5" fill="#e8eef6" stroke="#6a85b0" stroke-width="0.5"/><path d="M0.3 3 L3 3 L3.8 4 L6.5 4 L6.5 7.5 L0.3 7.5Z" fill="#e6b64a"/><path d="M1 4.8 L7.5 4.8 L6.5 7.5 L0.3 7.5Z" fill="#f7d774"/></svg><svg class="a" style="left:434.9px;top:28.8px" width="8.5" height="8" viewBox="0 0 8.5 8"><rect x="0.3" y="1" width="7.5" height="6.5" fill="#e9f0f8" stroke="#5f7fb8" stroke-width="0.5"/><rect x="0.3" y="1" width="7.5" height="1.6" fill="#4e7cc8"/><path d="M4 4 L8 6 L5 7.5Z" fill="#e040a0"/><rect x="1.3" y="3.5" width="2" height="3" fill="#f4c040"/></svg><svg class="a" style="left:446px;top:28.8px" width="8" height="8" viewBox="0 0 8 8"><path d="M1 7 L6 2" stroke="#c03030" stroke-width="1.3"/><path d="M5 1 L7.5 0.8 L7.2 3.2" stroke="#777" stroke-width="0.9" fill="none"/><path d="M1.5 1.5 L6.5 6.5" stroke="#8a8a8a" stroke-width="0.9"/></svg><svg class="a" style="left:456.7px;top:28.8px" width="8.5" height="8" viewBox="0 0 8.5 8"><rect x="0.3" y="0.3" width="7.9" height="7.4" fill="#3d6fc6" stroke="#2a4f90" stroke-width="0.5"/><rect x="1.2" y="1.2" width="6" height="5.6" fill="#cfe0f6"/><path d="M1.5 4 L4.5 4 L4.5 2.2 L7.2 4.2 L4.5 6.2 L4.5 4.8 L1.5 4.8Z" fill="#2aa82a"/></svg><svg class="a" style="left:467.4px;top:28.5px" width="8" height="8.5" viewBox="0 0 8 8.5"><rect x="0.3" y="0.3" width="7.4" height="7.9" fill="#d6a640" stroke="#8a6a20" stroke-width="0.5"/><circle cx="4" cy="4.2" r="3.2" fill="#4cb84c"/><circle cx="3.3" cy="3.4" r="1.4" fill="#9ee09e"/></svg><svg class="a" style="left:478px;top:29.2px" width="7.5" height="7" viewBox="0 0 7.5 7"><rect x="0.3" y="0.3" width="6.9" height="6.4" fill="#f4f6fa" stroke="#6a85b0" stroke-width="0.5"/><rect x="0.3" y="0.3" width="6.9" height="1.5" fill="#5a86d0"/><rect x="1.2" y="3" width="2" height="1.2" fill="#333"/></svg><svg class="a" style="left:488.8px;top:32.2px" width="2.4" height="1.6" viewBox="0 0 2.4 1.6"><path d="M0 0 L2.4 0 L1.2 1.5Z" fill="#1e1e1e"/></svg><div class="a" style="left:493.8px;top:25.5px;width:5.2px;height:15px;border-radius:0 2px 2px 0;background:linear-gradient(90deg,#dde3ec,#d0d8e4)"></div><div class="a" style="left:161px;top:3px;width:6px;height:7px;background:#e6edf5;filter:blur(0.8px)"></div><div class="a" style="left:176px;top:3px;width:8px;height:7px;background:#e3eaf3;filter:blur(0.8px)"></div><div class="a" style="left:197px;top:5px;width:14px;height:2.5px;background:#e6edf5;filter:blur(0.8px)"></div><div class="t" style="left:180px;top:289.76px;font-size:6.6px;color:#e5141c;font-weight:bold;transform:scaleX(1.0509);">Here Name and Edit Variables</div><div class="t" style="left:133.8px;top:412.76px;font-size:6.6px;color:#e5141c;font-weight:bold;transform:scaleX(1.0315);">Click Variables button</div><svg class="a" style="left:0;top:0" width="631" height="484" viewBox="0 0 631 484"><path d="M129.5 289.5 C130.1 289.9 132.6 288.9 133.3 292.0 C134.0 295.1 133.1 303.3 133.5 308.0 C133.9 312.7 134.8 316.5 135.5 320.0 C136.2 323.5 137.1 326.6 138.0 329.0 C138.9 331.4 139.9 332.3 141.2 334.4 C142.5 336.5 143.9 340.0 146.0 341.6 C148.1 343.2 149.5 343.5 153.8 343.8 C158.1 344.1 166.8 343.3 172.0 343.5 C177.2 343.7 179.8 343.9 185.0 344.8 C190.2 345.7 196.9 347.6 203.5 348.8 C210.1 350.0 217.0 351.0 224.4 351.9 C231.8 352.8 240.2 353.2 248.0 354.0 C255.8 354.8 264.4 355.8 271.4 356.6 C278.4 357.4 280.6 357.7 290.0 358.6 C299.4 359.5 318.6 361.2 327.5 362.2 C336.4 363.2 335.5 363.8 343.4 364.4 C351.3 365.0 365.5 365.9 375.0 366.0 C384.5 366.1 393.5 365.4 400.4 364.7 C407.3 364.0 411.0 363.0 416.3 361.6 C421.6 360.2 425.7 358.1 432.0 356.5 C438.3 354.9 448.5 353.4 454.3 352.0 C460.1 350.6 463.8 349.7 467.0 348.0 C470.2 346.3 471.0 344.9 473.3 341.6 C475.6 338.3 478.7 332.4 480.7 328.0 C482.7 323.6 484.4 319.5 485.4 315.2 C486.4 310.9 486.7 306.2 486.7 302.0 C486.7 297.8 486.5 293.2 485.3 290.0 C484.1 286.8 482.7 285.1 479.7 283.0 C476.7 280.9 473.0 279.2 467.2 277.4 C461.4 275.6 453.3 273.7 445.0 272.4 C436.7 271.1 427.9 270.4 417.2 269.7 C406.5 269.0 388.9 268.9 381.0 268.3 C373.1 267.7 375.5 266.4 370.0 266.3 C364.5 266.2 356.1 267.0 347.8 267.7 C339.5 268.4 333.4 269.7 320.0 270.5 C306.6 271.3 282.7 272.2 267.6 272.3 C252.5 272.4 242.8 270.9 229.6 271.3 C216.4 271.7 200.0 273.8 188.4 274.5 C176.8 275.2 165.7 274.7 159.9 275.4 C154.1 276.1 156.2 277.5 153.5 278.6 C150.8 279.7 147.2 280.7 144.0 281.8 C140.8 282.9 136.9 283.9 134.5 285.0 C132.1 286.1 130.6 287.4 129.8 288.1 C129.0 288.9 129.6 289.3 129.5 289.5" fill="none" stroke="#e5141c" stroke-width="1.9" stroke-linejoin="round"/><path d="M118.5 455.6 C119.7 453.9 123.2 448.9 125.5 445.1 C127.8 441.3 130.4 435.2 132.4 432.9 C134.4 430.6 133.3 431.5 137.7 431.2 C142.1 430.9 151.3 431.5 158.6 431.2 C165.8 430.9 173.9 429.4 181.2 429.4 C188.5 429.4 197.1 430.6 202.2 431.2 C207.3 431.8 210.1 431.4 211.8 432.9 C213.5 434.3 212.3 437.0 212.6 439.9 C212.9 442.8 213.1 446.5 213.5 450.3 C213.9 454.1 216.5 460.5 215.2 462.5 C213.9 464.5 210.8 462.6 205.7 462.5 C200.6 462.4 191.1 462.1 184.7 461.7 C178.3 461.3 172.2 460.5 167.3 459.9 C162.4 459.3 159.4 458.6 155.1 458.2 C150.8 457.8 146.1 457.6 141.2 457.3 C136.3 457.0 129.3 456.7 125.5 456.4 C121.7 456.1 119.7 455.7 118.5 455.6" fill="none" stroke="#e5141c" stroke-width="1.9" stroke-linejoin="round"/></svg></body></html>
